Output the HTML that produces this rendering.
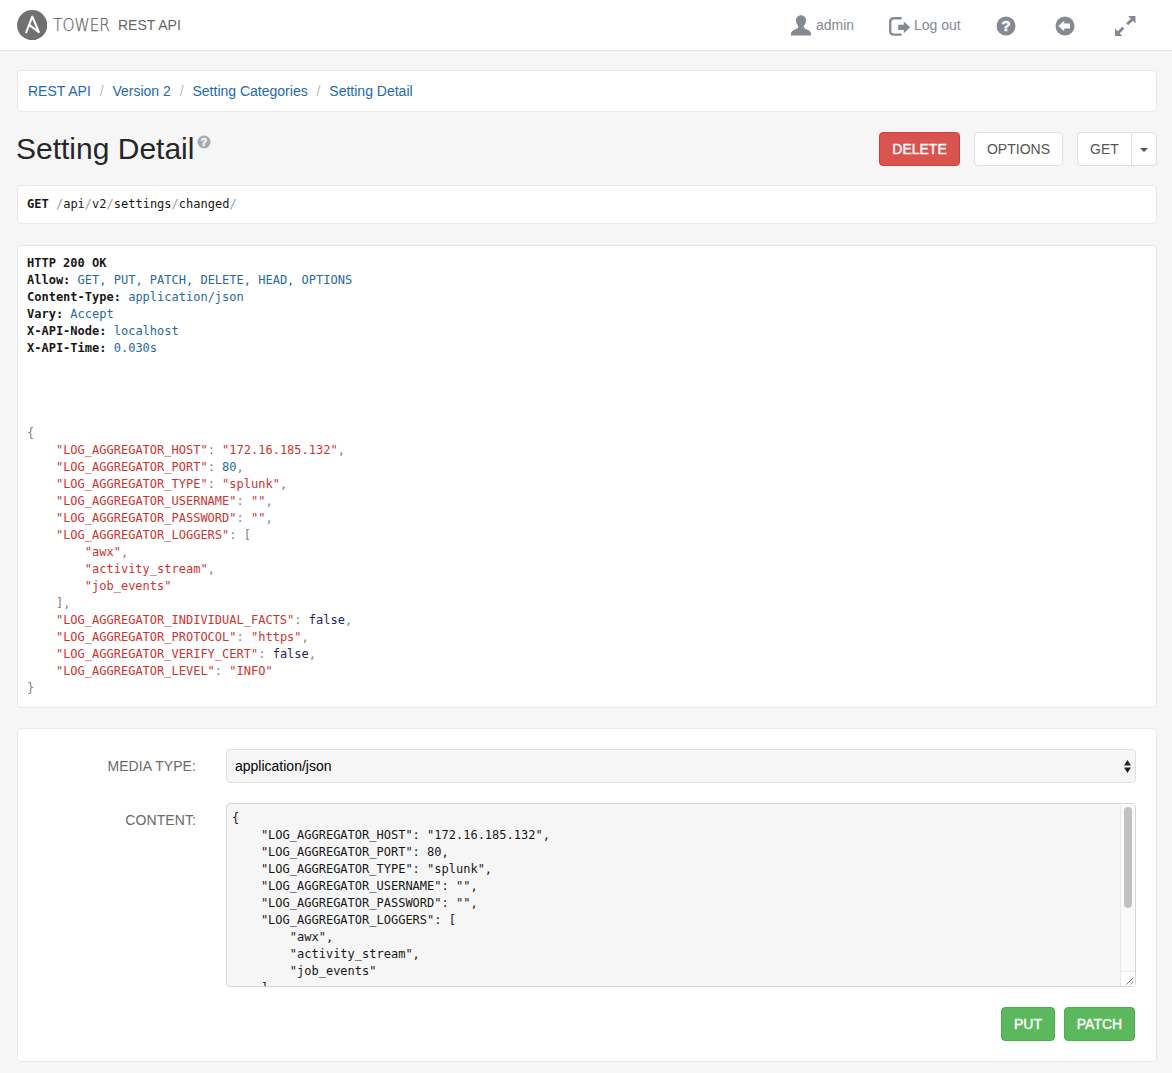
<!DOCTYPE html>
<html lang="en">
<head>
<meta charset="utf-8">
<title>Setting Detail · Tower REST API</title>
<style>
*{box-sizing:border-box}
html,body{margin:0;padding:0}
body{width:1172px;height:1073px;overflow:hidden;background:#f6f6f6;font-family:"Liberation Sans",Arial,sans-serif;font-size:14px;line-height:20px;color:#171717;position:relative}
a{color:#2268b0;text-decoration:none}
.navbar{position:absolute;left:0;top:0;width:1172px;height:51px;background:#fff;border-bottom:1px solid #e7e7e7}
.logo{position:absolute;left:17.100px;top:9.800px;width:30.400px;height:30.400px}
.brand{position:absolute;left:53px;top:14px;font-size:16.8px;line-height:22px;color:#666;-webkit-text-stroke:.25px #666;transform:scaleX(0.915);transform-origin:0 0;font-family:"DejaVu Sans","Liberation Sans",sans-serif;font-weight:200;letter-spacing:0}
.brand2{position:absolute;left:118px;top:15px;font-size:14px;line-height:20px;color:#666}
.nav a{position:absolute;top:15px;font-size:14px;line-height:20px;color:#848992}
.nav svg{position:absolute}
.crumb{position:absolute;left:17px;top:70px;width:1140px;height:42px;background:#fff;border:1px solid #e8e8e8;border-radius:4px;padding:10px 10px;font-size:14px;line-height:20px;white-space:nowrap}
.crumb .sep{color:#bbb;padding:0 5px}
h1{position:absolute;left:16px;top:131.500px;margin:0;font-size:30px;line-height:33px;font-weight:normal;color:#262626;white-space:nowrap}
.btn{position:absolute;height:34px;border-radius:4px;font-size:14px;line-height:20px;padding:5.5px 0;text-align:center;text-transform:uppercase}
.btn-default{background:#fff;border:1px solid #e0e0e0;color:#555}
.btn-danger{background:#d9534f;border:1px solid #d43f3a;color:#fff;font-weight:normal;-webkit-text-stroke:.4px #fff}
.btn-success{background:#5cb85c;border:1px solid #4cae4c;color:#fff;-webkit-text-stroke:.4px #fff}
pre{margin:0;font-family:"DejaVu Sans Mono","Liberation Mono",monospace;font-size:12px;line-height:17px;color:#171717;white-space:pre}
.box{position:absolute;left:17px;width:1140px;background:#fff;border:1px solid #e8e8e8;border-radius:4px}
.req{top:185px;height:39px;padding:10px 9px}
.resp{top:245px;height:463px;padding:9px 9px}
.sl{color:#9a9a9a}
.h{color:#29699c}
.s{color:#cc342f}
.p{color:#808080}
.k{color:#25255c}
.form{top:728px;height:334px}
label{position:absolute;font-size:14px;line-height:20px;color:#6a6a6a;text-transform:uppercase;text-align:right;width:178px;left:0;letter-spacing:.08px;white-space:nowrap}
.select{position:absolute;left:208px;top:20px;width:910px;height:34px;background:#f6f6f6;border:1px solid #e0e0e0;border-radius:4px;padding:6px 8px;font-size:14px;line-height:20px;color:#000}
.ta{position:absolute;left:208px;top:74px;width:910px;height:184px;background:#f6f6f6;border:1px solid #d6d6d6;border-radius:4px;overflow:hidden}
.ta pre{position:absolute;left:5px;top:6px;color:#171717}
</style>
</head>
<body>
<div class="navbar">
  <svg class="logo" viewBox="0 0 30.400 30.400"><circle cx="15.200" cy="15.200" r="15.100" fill="#707070"/><path d="M9.200 22.300L15.300 6.700L21.900 22.100L12.900 15.300" fill="none" stroke="#fff" stroke-width="2.100" stroke-linejoin="round" stroke-linecap="round"/></svg>
  <span class="brand">TOWER</span><span class="brand2">REST API</span>
  <div class="nav">
    <svg style="left:790.700px;top:15.400px" width="20" height="21" viewBox="0 0 20 21"><path d="M10 .2c2.900 0 5 2.300 5 5.400 0 2.200-.9 4.200-2.200 5.300v1.200c0 .9 1.200 1.500 3 2.300 2.500 1.100 4.200 2 4.200 4.300v1.800H0v-1.800c0-2.300 1.700-3.200 4.200-4.300 1.800-.8 3-1.400 3-2.300v-1.200C5.900 9.800 5 7.800 5 5.600 5 2.500 7.100.2 10 .2z" fill="#848992"/></svg>
    <a style="left:816px">admin</a>
    <svg style="left:888px;top:16px" width="23" height="21" viewBox="0 0 23 21"><path d="M13.600 2.200H6c-2.400 0-3.800 1.400-3.800 3.800v8.800c0 2.400 1.400 3.800 3.800 3.800h7.600" fill="none" stroke="#848992" stroke-width="2.400"/><path d="M10.200 8.700h5.600V5.400l6.400 5.900-6.400 5.900v-3.300h-5.600z" fill="#848992"/></svg>
    <a style="left:914px">Log out</a>
    <svg style="left:995.800px;top:15.800px" width="20" height="20" viewBox="0 0 20 20"><circle cx="10" cy="10" r="9.500" fill="#848992"/><text x="10" y="15.400" text-anchor="middle" font-family="Liberation Sans, Arial, sans-serif" font-weight="bold" font-size="15" fill="#fff" stroke="#fff" stroke-width=".5">?</text></svg>
    <svg style="left:1055.100px;top:15.800px" width="20" height="20" viewBox="0 0 20 20"><circle cx="10" cy="10" r="9.500" fill="#848992"/><path d="M3.300 10l5.900-5.200v2.800h5.800v4.800H9.200v2.800z" fill="#fff"/></svg>
    <svg style="left:1115px;top:16px" width="21" height="20" viewBox="0 0 21 20"><path d="M20.500 0v7.400L13.100 0zM0 20v-7.400L7.400 20z" fill="#848992"/><path d="M17.500 3L12.200 8.300M3 17l5.300-5.300" stroke="#848992" stroke-width="3" fill="none"/></svg>
  </div>
</div>

<div class="crumb"><a>REST API</a> <span class="sep">/&nbsp;</span><a>Version 2</a> <span class="sep">/&nbsp;</span><a>Setting Categories</a> <span class="sep">/&nbsp;</span><a>Setting Detail</a></div>

<h1>Setting Detail</h1>
<svg style="position:absolute;left:197px;top:135px" width="14" height="14" viewBox="0 0 14 14"><circle cx="7" cy="7" r="6.500" fill="#a9a9a9"/><text x="7" y="10.800" text-anchor="middle" font-family="Liberation Sans, Arial, sans-serif" font-weight="bold" font-size="10.500" fill="#f6f6f6" stroke="#f6f6f6" stroke-width=".5">?</text></svg>

<div class="btn btn-danger" style="left:879px;top:132px;width:81px">Delete</div>
<div class="btn btn-default" style="left:974px;top:132px;width:89px">Options</div>
<div class="btn btn-default" style="left:1077px;top:132px;width:55px;border-radius:4px 0 0 4px">Get</div>
<div class="btn btn-default" style="left:1131px;top:132px;width:26px;border-radius:0 4px 4px 0"><svg width="8" height="4" viewBox="0 0 8 4" style="position:absolute;left:8px;top:14.500px"><path d="M0 0h8L4 4z" fill="#555"/></svg></div>

<div class="box req"><pre><b>GET</b> <span class="sl">/</span>api<span class="sl">/</span>v2<span class="sl">/</span>settings<span class="sl">/</span>changed<span class="sl">/</span></pre></div>

<div class="box resp"><pre><b>HTTP 200 OK</b>
<b>Allow:</b> <span class="h">GET, PUT, PATCH, DELETE, HEAD, OPTIONS</span>
<b>Content-Type:</b> <span class="h">application/json</span>
<b>Vary:</b> <span class="h">Accept</span>
<b>X-API-Node:</b> <span class="h">localhost</span>
<b>X-API-Time:</b> <span class="h">0.030s</span>




<span class="p">{</span>
    <span class="s">"LOG_AGGREGATOR_HOST"</span><span class="p">:</span> <span class="s">"172.16.185.132"</span><span class="p">,</span>
    <span class="s">"LOG_AGGREGATOR_PORT"</span><span class="p">:</span> <span class="h">80</span><span class="p">,</span>
    <span class="s">"LOG_AGGREGATOR_TYPE"</span><span class="p">:</span> <span class="s">"splunk"</span><span class="p">,</span>
    <span class="s">"LOG_AGGREGATOR_USERNAME"</span><span class="p">:</span> <span class="s">""</span><span class="p">,</span>
    <span class="s">"LOG_AGGREGATOR_PASSWORD"</span><span class="p">:</span> <span class="s">""</span><span class="p">,</span>
    <span class="s">"LOG_AGGREGATOR_LOGGERS"</span><span class="p">:</span> <span class="p">[</span>
        <span class="s">"awx"</span><span class="p">,</span>
        <span class="s">"activity_stream"</span><span class="p">,</span>
        <span class="s">"job_events"</span>
    <span class="p">],</span>
    <span class="s">"LOG_AGGREGATOR_INDIVIDUAL_FACTS"</span><span class="p">:</span> <span class="k">false</span><span class="p">,</span>
    <span class="s">"LOG_AGGREGATOR_PROTOCOL"</span><span class="p">:</span> <span class="s">"https"</span><span class="p">,</span>
    <span class="s">"LOG_AGGREGATOR_VERIFY_CERT"</span><span class="p">:</span> <span class="k">false</span><span class="p">,</span>
    <span class="s">"LOG_AGGREGATOR_LEVEL"</span><span class="p">:</span> <span class="s">"INFO"</span>
<span class="p">}</span></pre></div>

<div class="box form">
  <label style="top:27px">Media type:</label>
  <div class="select">application/json<svg width="7" height="13" viewBox="0 0 7 13" style="position:absolute;left:897px;top:9.500px"><path d="M3.500 0l3.500 5.500H0zM3.500 13L0 7.500h7z" fill="#222"/></svg></div>
  <label style="top:80.500px">Content:</label>
  <div class="ta"><pre>{
    "LOG_AGGREGATOR_HOST": "172.16.185.132",
    "LOG_AGGREGATOR_PORT": 80,
    "LOG_AGGREGATOR_TYPE": "splunk",
    "LOG_AGGREGATOR_USERNAME": "",
    "LOG_AGGREGATOR_PASSWORD": "",
    "LOG_AGGREGATOR_LOGGERS": [
        "awx",
        "activity_stream",
        "job_events"
    ],
    "LOG_AGGREGATOR_INDIVIDUAL_FACTS": false,</pre>
    <div style="position:absolute;right:0;top:0;width:15px;height:182px;background:#fafafa;border-left:1px solid #e8e8e8"></div>
    <div style="position:absolute;right:3px;top:3px;width:8px;height:101px;background:#c1c1c1;border-radius:4px"></div>
    <div style="position:absolute;right:0;bottom:0;width:15px;height:15px;background:#fff;border-left:1px solid #e8e8e8;border-top:1px solid #e8e8e8"><svg width="14" height="14" viewBox="0 0 14 14" style="position:absolute;left:0;top:0"><path d="M5.500 12.500l7-7M9.500 12.500l3-3" stroke="#777" stroke-width="1" fill="none"/></svg></div>
  </div>
  <div class="btn btn-success" style="left:983px;top:278px;width:54px;height:34px;padding:6px 0">Put</div>
  <div class="btn btn-success" style="left:1046px;top:278px;width:71px;height:34px;padding:6px 0">Patch</div>
</div>
</body>
</html>
